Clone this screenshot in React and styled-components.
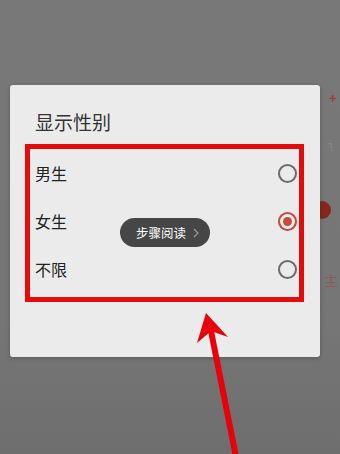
import React, { useState } from "react";
import styled, { createGlobalStyle, css } from "styled-components";

const GlobalStyle = createGlobalStyle`
  body {
    margin: 0;
    font-family: "Noto Sans CJK SC", "Noto Sans", sans-serif;
  }
`;

const Page = styled.div`
  position: relative;
  width: 340px;
  height: 454px;
  overflow: hidden;
  background: linear-gradient(#787878 0%, #767676 70%, #6e6e6e 100%);
  display: flex;
  justify-content: flex-end;
`;

// the dimmed screen that lies behind the dialog
const SideColumn = styled.div`
  width: 30px;
  padding-top: 90px;
  padding-left: 8px;
  box-sizing: border-box;
  display: flex;
  flex-direction: column;
  align-items: flex-start;
`;

const Plus = styled.div`
  height: 16px;
  line-height: 16px;
  font-size: 13px;
  font-weight: 700;
  color: #a23a35;
  padding-left: 11px;
`;

const Hint = styled.div`
  margin-top: 34px;
  height: 16px;
  line-height: 16px;
  font-size: 11px;
  color: #8c8c8c;
  padding-left: 10px;
  transform: rotate(-20deg);
`;

const Dot = styled.div`
  margin-top: 45px;
  margin-left: -5px;
  width: 18px;
  height: 18px;
  border-radius: 50%;
  background: #86271f;
`;

const SideText = styled.div`
  margin-top: 52px;
  height: 18px;
  line-height: 18px;
  font-size: 14px;
  color: #8e5a55;
  padding-left: 6px;
`;

const Dialog = styled.div`
  position: absolute;
  top: 85px;
  left: 10px;
  width: 310px;
  height: 272px;
  background: #ebebeb;
  border-radius: 3px;
  box-shadow: 0 1px 4px rgba(0, 0, 0, 0.25);
`;

const Title = styled.div`
  padding: 25px 0 0 25px;
  font-size: 19px;
  line-height: 24px;
  color: #333;
`;

const Options = styled.div`
  margin: 10px 0 0 15px;
  width: 279px;
  box-sizing: border-box;
  border: 5px solid #e40b0b;
  padding: 0 2px 4px 5px;
`;

const Row = styled.label`
  height: 48px;
  display: flex;
  align-items: center;
  justify-content: space-between;
  font-size: 16px;
  color: #222;
  cursor: pointer;
`;

const Radio = styled.span`
  width: 19px;
  height: 19px;
  box-sizing: border-box;
  border-radius: 50%;
  border: 2px solid #6b6b6b;
  display: flex;
  align-items: center;
  justify-content: center;

  ${({ $checked }) =>
    $checked &&
    css`
      border-color: #c2493c;
      &::after {
        content: "";
        width: 9px;
        height: 9px;
        border-radius: 50%;
        background: #c94a3d;
      }
    `}
`;

const Toast = styled.div`
  position: absolute;
  left: 110px;
  top: 133px;
  width: 90px;
  height: 29px;
  box-sizing: border-box;
  padding-left: 16px;
  border-radius: 15px;
  background: #464646;
  display: flex;
  align-items: center;
  gap: 7px;
  font-size: 12.5px;
  color: #fff;
`;

const Arrow = styled.svg`
  position: absolute;
  left: 0;
  top: 0;
  pointer-events: none;
`;

const options = ["男生", "女生", "不限"];

export default function App() {
  const [picked, setPicked] = useState("女生");

  return (
    <>
      <GlobalStyle />
      <Page>
        <SideColumn>
          <Plus>+</Plus>
          <Hint>?</Hint>
          <Dot />
          <SideText>主</SideText>
        </SideColumn>

        <Dialog>
          <Title>显示性别</Title>
          <Options>
            {options.map((o) => (
              <Row key={o} onClick={() => setPicked(o)}>
                {o}
                <Radio $checked={picked === o} />
              </Row>
            ))}
          </Options>

          <Toast>
            步骤阅读
            <svg width="6" height="10" viewBox="0 0 6 10">
              <path d="M1 1l4 4-4 4" fill="none" stroke="#9a9a9a" strokeWidth="1.2" />
            </svg>
          </Toast>
        </Dialog>

        <Arrow width="340" height="454" viewBox="0 0 340 454">
          <line x1="210" y1="326" x2="237" y2="462" stroke="#e8000b" strokeWidth="6" />
          <polygon points="206,313 228,337 211,331 197,343" fill="#e8000b" />
        </Arrow>
      </Page>
    </>
  );
}
